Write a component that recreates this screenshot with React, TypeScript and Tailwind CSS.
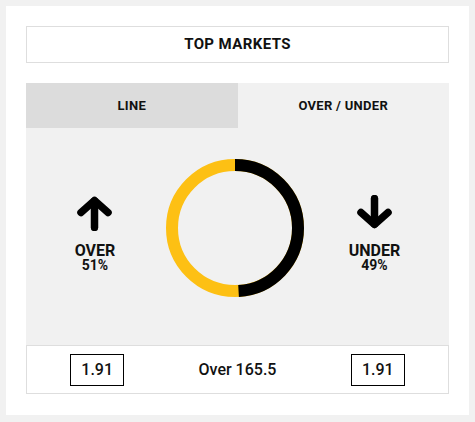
const ArrowUp = () => (
  <svg width="36" height="36" viewBox="0 0 36 36" fill="none" stroke="#000" strokeWidth="7.5" strokeLinecap="round" strokeLinejoin="round">
    <path d="M17.5 32.5V6" />
    <path d="M4 17.5 17.5 5.5 31 17.5" />
  </svg>
);

const ArrowDown = () => (
  <svg width="36" height="36" viewBox="0 0 36 36" fill="none" stroke="#000" strokeWidth="7.5" strokeLinecap="round" strokeLinejoin="round">
    <path d="M17.5 3.5V29" />
    <path d="M4 17.5 17.5 29.5 31 17.5" />
  </svg>
);

const Donut = ({ under }: { under: number }) => {
  const r = 63;
  const c = 2 * Math.PI * r;
  return (
    <svg width="138" height="138" viewBox="0 0 138 138">
      <circle cx="69" cy="69" r={r} fill="none" stroke="#fdc014" strokeWidth="12" />
      <circle
        cx="69"
        cy="69"
        r={r}
        fill="none"
        stroke="#000"
        strokeWidth="12"
        strokeDasharray={`${(c * under) / 100} ${c}`}
        transform="rotate(-90 69 69)"
      />
    </svg>
  );
};

const Odds = ({ value }: { value: string }) => (
  <div className="w-[54px] h-[32px] border border-black flex items-center justify-center text-[16px] font-medium">
    {value}
  </div>
);

export default function App() {
  return (
    <div className="min-h-[422px] bg-[#f1f1f1] p-[6px] text-[#111] font-['Roboto',sans-serif]">
      <div className="bg-white px-[20px] pt-[20px] pb-[21px]">
        <div className="h-[37px] border border-[#dedede] flex items-center justify-center text-[15px] font-bold tracking-[0.4px]">
          TOP MARKETS
        </div>

        <div className="mt-[20px] bg-[#f1f1f1]">
          <div className="flex h-[45px] text-[13px] font-bold tracking-[0.3px]">
            <div className="flex-1 bg-[#dcdcdc] flex items-center justify-center">LINE</div>
            <div className="flex-1 flex items-center justify-center">OVER / UNDER</div>
          </div>

          <div className="flex h-[217px] pt-[31px]">
            <div className="w-[138px] mt-[36px] flex flex-col items-center">
              <ArrowUp />
              <div className="mt-[12px] text-center font-bold">
                <div className="text-[16px] leading-[15px]">OVER</div>
                <div className="text-[14px] leading-[15px]">51%</div>
              </div>
            </div>
            <div className="ml-[2px]">
              <Donut under={49} />
            </div>
            <div className="w-[141px] mt-[36px] flex flex-col items-center">
              <ArrowDown />
              <div className="mt-[12px] text-center font-bold">
                <div className="text-[16px] leading-[15px]">UNDER</div>
                <div className="text-[14px] leading-[15px]">49%</div>
              </div>
            </div>
          </div>

          <div className="grid grid-cols-3 h-[49px] bg-white border border-[#dedede] items-center justify-items-center">
            <Odds value="1.91" />
            <div className="text-[16px] font-medium">Over 165.5</div>
            <Odds value="1.91" />
          </div>
        </div>
      </div>
    </div>
  );
}
